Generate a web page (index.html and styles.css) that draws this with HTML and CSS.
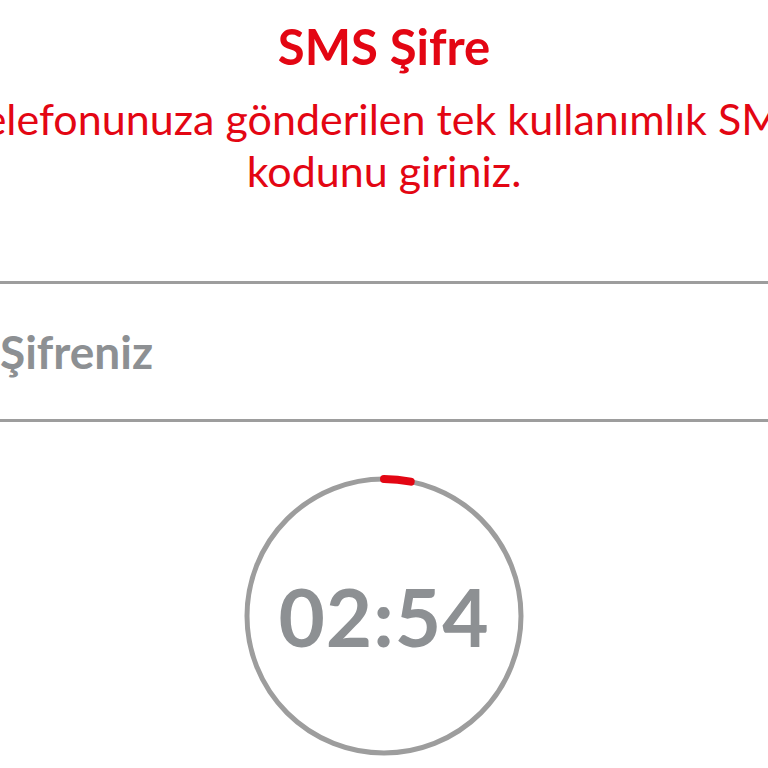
FILE: index.html
```html
<!DOCTYPE html>
<html lang="tr">
<head>
<meta charset="utf-8">
<title>SMS Şifre</title>
<link rel="stylesheet" href="styles.css">
</head>
<body>
<div class="page">
  <h1 class="title">SMS Şifre</h1>
  <div class="subtitle">
    <p class="line">Telefonunuza gönderilen tek kullanımlık SMS</p>
    <p class="line">kodunu giriniz.</p>
  </div>
  <div class="field">
    <input class="input" type="text" placeholder="Şifreniz">
  </div>
  <div class="timer">
    <svg class="ring" width="284" height="284" viewBox="0 0 284 284">
      <circle cx="142" cy="142" r="137" fill="none" stroke="#9d9d9d" stroke-width="5"/>
      <path d="M142 5 A137 137 0 0 1 168.7 7.6" fill="none" stroke="#e30613" stroke-width="8" stroke-linecap="round"/>
    </svg>
    <span class="time">02:54</span>
  </div>
</div>
</body>
</html>
```
FILE: styles.css
```css
html, body {
  margin: 0;
  padding: 0;
  background: #ffffff;
  overflow: hidden;
}
body {
  font-family: Lato, "Noto Sans", sans-serif;
  width: 768px;
  height: 768px;
}
.page {
  width: 860px;
  margin-left: -46px;
  display: flex;
  flex-direction: column;
  align-items: center;
}
.title {
  margin: 16px 0 0;
  font-size: 49px;
  line-height: 60px;
  font-weight: 700;
  color: #e30613;
}
.subtitle {
  margin-top: 17px;
  display: flex;
  flex-direction: column;
  align-items: center;
  width: 100%;
}
.line {
  margin: 0;
  white-space: nowrap;
  font-size: 43px;
  line-height: 52px;
  color: #e30613;
}
.field {
  margin-top: 84px;
  width: 100%;
  box-sizing: border-box;
  border-top: 3px solid #9d9d9d;
  border-bottom: 3px solid #9d9d9d;
  height: 141px;
  display: flex;
  align-items: center;
  padding-left: 46px;
}
.input {
  border: 0;
  outline: 0;
  padding: 0;
  margin: 0;
  width: 600px;
  font-family: Lato, "Noto Sans", sans-serif;
  font-size: 46px;
  font-weight: 700;
  color: #8d9093;
  background: transparent;
}
.input::placeholder {
  color: #8d9093;
  opacity: 1;
}
.timer {
  margin-top: 52px;
  width: 284px;
  height: 284px;
  position: relative;
  display: flex;
  align-items: center;
  justify-content: center;
}
.ring {
  position: absolute;
  left: 0;
  top: 0;
}
.time {
  font-size: 80px;
  font-weight: 700;
  color: #8d9093;
  letter-spacing: 1px;
}
```
